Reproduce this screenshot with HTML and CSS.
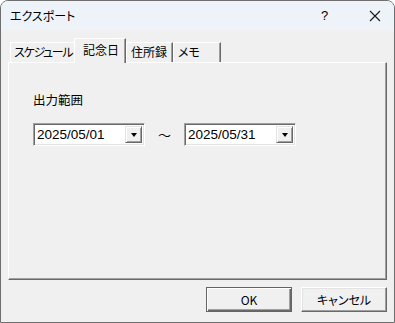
FILE: index.html
```html
<!DOCTYPE html>
<html lang="ja">
<head>
    <meta charset="UTF-8">
    <title>エクスポート</title>
    <link rel="stylesheet" href="styles.css">
</head>
<body>
    <div class="window">
        <div class="titlebar">
            <span class="title">エクスポート</span>
            <span class="help">?</span>
            <span class="close">
                <svg width="12" height="12" viewBox="0 0 12 12"><path d="M1 1L11 11M11 1L1 11" stroke="#1a1a1a" stroke-width="1.1" fill="none"/></svg>
            </span>
        </div>

        <div class="body">
            <div class="tabs">
                <div class="tab tab-schedule">スケジュール</div>
                <div class="tab active tab-anniv">記念日</div>
                <div class="tab tab-address">住所録</div>
                <div class="tab tab-memo">メモ</div>
            </div>

            <div class="panel">
                <div class="label">出力範囲</div>
                <div class="range">
                    <div class="combo">
                        <span class="combo-text">2025/05/01</span>
                        <span class="combo-btn"><span class="arrow"></span></span>
                    </div>
                    <span class="tilde">～</span>
                    <div class="combo">
                        <span class="combo-text">2025/05/31</span>
                        <span class="combo-btn"><span class="arrow"></span></span>
                    </div>
                </div>
            </div>

            <div class="buttons">
                <button class="btn default">OK</button>
                <button class="btn">キャンセル</button>
            </div>
        </div>
    </div>
</body>
</html>
```

FILE: styles.css
```css
body {
    margin: 0;
    padding: 0;
    background-color: #ffffff;
    font-family: "Noto Sans CJK JP", "Liberation Sans", sans-serif;
    font-size: 12px;
    font-feature-settings: "palt";
    color: #000;
}
.window {
    width: 395px;
    height: 323px;
    box-sizing: border-box;
    border: 1px solid #6f6f6f;
    border-radius: 8px 8px 0 0;
    background-color: #f0f0f0;
    display: flex;
    flex-direction: column;
    overflow: hidden;
}
.titlebar {
    height: 29px;
    flex: none;
    display: flex;
    align-items: center;
    background-color: #eef3f9;
    padding-left: 9px;
}
.title {
    flex: 1;
    font-size: 12px;
}
.help {
    width: 14px;
    margin-right: 34px;
    font-size: 13px;
    font-family: "Liberation Sans", sans-serif;
}
.close {
    width: 12px;
    margin-right: 13px;
    display: flex;
}
.body {
    flex: 1;
    padding: 8px 6px 0 7px;
}
.tabs {
    display: flex;
    align-items: flex-end;
    height: 24px;
    padding-left: 2px;
}
.tab {
    height: 20px;
    box-sizing: border-box;
    line-height: 18px;
    padding-left: 5px;
    white-space: nowrap;
    border-top: 1px solid #ffffff;
    border-left: 1px solid #ffffff;
    border-right: 1px solid #696969;
    box-shadow: inset -1px 0 0 #a0a0a0;
    background-color: #f0f0f0;
}
.tab-schedule {
    width: 65px;
    padding-left: 3px;
    letter-spacing: -1.3px;
    border-right: none;
    box-shadow: none;
}
.tab-anniv {
    width: 52px;
    padding-left: 8px;
}
.tab-address {
    width: 47px;
    padding-left: 4px;
}
.tab-memo {
    width: 48px;
    padding-left: 4px;
}
.tab.active {
    height: 25px;
    margin-bottom: -1px;
    margin-left: -1px;
    line-height: 21px;
    position: relative;
    z-index: 1;
}
.panel {
    height: 218px;
    box-sizing: border-box;
    width: 379px;
    border-top: 1px solid #ffffff;
    border-left: 1px solid #ffffff;
    border-right: 1px solid #696969;
    border-bottom: 1px solid #696969;
    box-shadow: inset -1px -1px 0 #a0a0a0;
    padding: 27px 0 0 24px;
}
.label {
    font-size: 12.5px;
    line-height: 20px;
}
.range {
    display: flex;
    align-items: center;
    margin-top: 13px;
}
.combo {
    width: 112px;
    height: 23px;
    box-sizing: border-box;
    background-color: #ffffff;
    border-top: 1px solid #a0a0a0;
    border-left: 1px solid #a0a0a0;
    border-right: 1px solid #ffffff;
    border-bottom: 1px solid #ffffff;
    box-shadow: inset 1px 1px 0 #696969, inset -1px -1px 0 #e3e3e3;
    display: flex;
    align-items: center;
    padding: 0 2px 0 3px;
}
.combo-text {
    flex: 1;
    font-family: "Liberation Sans", sans-serif;
    font-size: 13.5px;
}
.combo-btn {
    width: 17px;
    height: 17px;
    box-sizing: border-box;
    background-color: #f0f0f0;
    border-top: 1px solid #e3e3e3;
    border-left: 1px solid #e3e3e3;
    border-right: 1px solid #696969;
    border-bottom: 1px solid #696969;
    box-shadow: inset 1px 1px 0 #ffffff, inset -1px -1px 0 #a0a0a0;
    display: flex;
    align-items: center;
    justify-content: center;
}
.arrow {
    width: 0;
    height: 0;
    border-left: 3.5px solid transparent;
    border-right: 3.5px solid transparent;
    border-top: 4px solid #000;
    margin-top: 1px;
}
.tilde {
    width: 39px;
    text-align: center;
    font-size: 13px;
}
.buttons {
    display: flex;
    justify-content: flex-end;
    gap: 9px;
    margin-top: 7px;
    padding-right: 1px;
}
.btn {
    width: 86px;
    height: 25px;
    box-sizing: border-box;
    font-family: "Noto Sans CJK JP", sans-serif;
    font-size: 12px;
    font-feature-settings: "palt";
    background-color: #f0f0f0;
    border-top: 1px solid #ffffff;
    border-left: 1px solid #ffffff;
    border-right: 1px solid #696969;
    border-bottom: 1px solid #696969;
    box-shadow: inset -1px -1px 0 #a0a0a0, inset 1px 1px 0 #e3e3e3;
    padding: 0;
}
.btn.default {
    border: 1px solid #646464;
    box-shadow: inset 1px 1px 0 #ffffff, inset -1px -1px 0 #696969, inset -2px -2px 0 #a0a0a0;
}
```
